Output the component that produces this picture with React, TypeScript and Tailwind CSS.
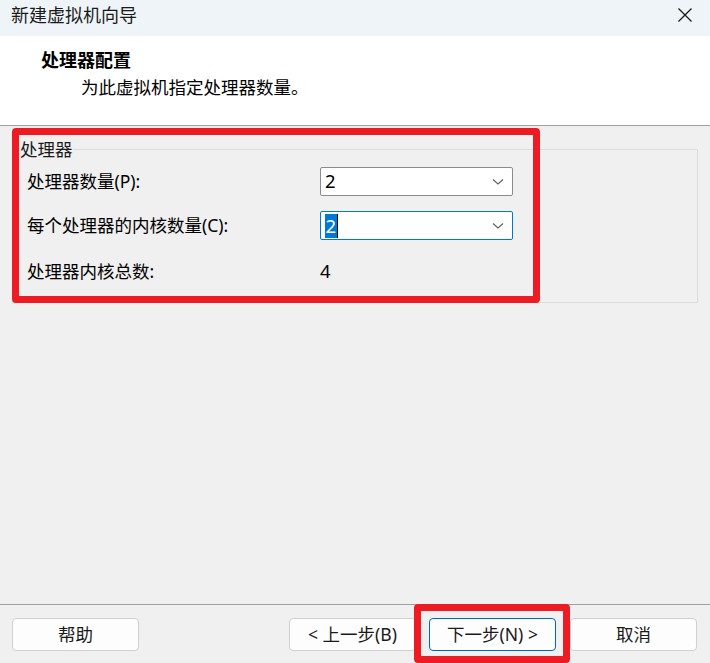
import React from "react";

function Chevron() {
  return (
    <svg width="12" height="8" viewBox="0 0 12 8" className="shrink-0">
      <path d="M1 1.5 L6 6 L11 1.5" fill="none" stroke="#5f5f5f" strokeWidth="1.1" />
    </svg>
  );
}

export default function App() {
  const font = "font-['Noto_Sans','Noto_Sans_CJK_SC',sans-serif]";
  return (
    <div className={`relative w-[710px] h-[663px] bg-[#f0f0f0] flex flex-col overflow-hidden text-black ${font}`}>
      {/* title bar */}
      <div className="h-[36px] bg-[#eef4f7] flex items-center justify-between pl-[11px] pr-[17px] shrink-0">
        <span className="text-[18px] leading-none text-[#1a1a1a] -mt-[7px]">新建虚拟机向导</span>
        <svg width="16" height="16" viewBox="0 0 16 16" className="-mt-[6px]">
          <path d="M1.5 1.5 L14.5 14.5 M14.5 1.5 L1.5 14.5" stroke="#1a1a1a" strokeWidth="1.3" fill="none" />
        </svg>
      </div>

      {/* header */}
      <div className="h-[90px] bg-white border-b border-[#a0a0a0] shrink-0 flex flex-col pl-[41px] pt-[11px]">
        <div className="text-[18px] font-bold leading-[26px]">处理器配置</div>
        <div className="text-[17.5px] leading-[26px] pl-[40px] mt-[1px]">为此虚拟机指定处理器数量。</div>
      </div>

      {/* body */}
      <div className="flex-1 pt-[12px] pl-[12px] pr-[12px]">
        <fieldset className="border border-[#dcdcdc] pl-[14px] pr-[14px] pt-[7px] pb-[16px] m-0">
          <legend className="-ml-[7px] px-0 text-[17.5px] leading-[22px] text-[#1a1a1a]">处理器</legend>
          <div className="flex flex-col gap-[15px]">
            <div className="flex items-center h-[29px]">
              <div className="w-[293px] text-[17.5px] leading-none">处理器数量(P):</div>
              <div className="w-[193px] h-[29px] bg-white border border-[#8c8c8c] rounded-[2px] flex items-center justify-between pl-[4px] pr-[8px]">
                <span className="text-[18.5px] leading-none">2</span>
                <Chevron />
              </div>
            </div>
            <div className="flex items-center h-[29px]">
              <div className="w-[293px] text-[17.5px] leading-none">每个处理器的内核数量(C):</div>
              <div className="w-[193px] h-[29px] bg-white border border-[#0078d4] rounded-[2px] flex items-center justify-between pl-[4px] pr-[8px]">
                <span className="flex items-center h-[24px]">
                  <span className="bg-[#0078d7] text-white text-[18.5px] leading-[24px] px-[0.5px]">2</span>
                  <span className="w-[1px] h-[24px] bg-black" />
                </span>
                <Chevron />
              </div>
            </div>
            <div className="flex items-center h-[29px] mt-[2px]">
              <div className="w-[293px] text-[17.5px] leading-none">处理器内核总数:</div>
              <div className="text-[18.5px] leading-none">4</div>
            </div>
          </div>
        </fieldset>
      </div>

      {/* footer */}
      <div className="h-[59px] border-t border-[#a0a0a0] shrink-0 flex items-start pt-[13px] pl-[12px] pr-[13px]">
        <button className="w-[127px] h-[33px] bg-[#fdfdfd] border border-[#d0d0d0] rounded-[4px] text-[17.5px] leading-none text-[#1a1a1a]">
          帮助
        </button>
        <div className="flex-1" />
        <button className="w-[127px] h-[33px] bg-[#fdfdfd] border border-[#d0d0d0] rounded-[4px] text-[17.5px] leading-none text-[#1a1a1a]">
          &lt; 上一步(B)
        </button>
        <button className="ml-[13px] w-[127px] h-[33px] bg-[#fdfdfd] border border-[#0067c0] rounded-[4px] text-[17.5px] leading-none text-[#1a1a1a]">
          下一步(N) &gt;
        </button>
        <button className="ml-[14px] w-[127px] h-[33px] bg-[#fdfdfd] border border-[#d0d0d0] rounded-[4px] text-[17.5px] leading-none text-[#1a1a1a]">
          取消
        </button>
      </div>

      {/* annotation overlays */}
      <div className="absolute left-[12px] top-[128px] w-[528px] h-[175px] border-[7px] border-[#ed1c24] rounded-[4px] pointer-events-none" />
      <div className="absolute left-[414px] top-[604px] w-[156px] h-[59px] border-[7px] border-[#ed1c24] rounded-[4px] pointer-events-none" />
    </div>
  );
}
